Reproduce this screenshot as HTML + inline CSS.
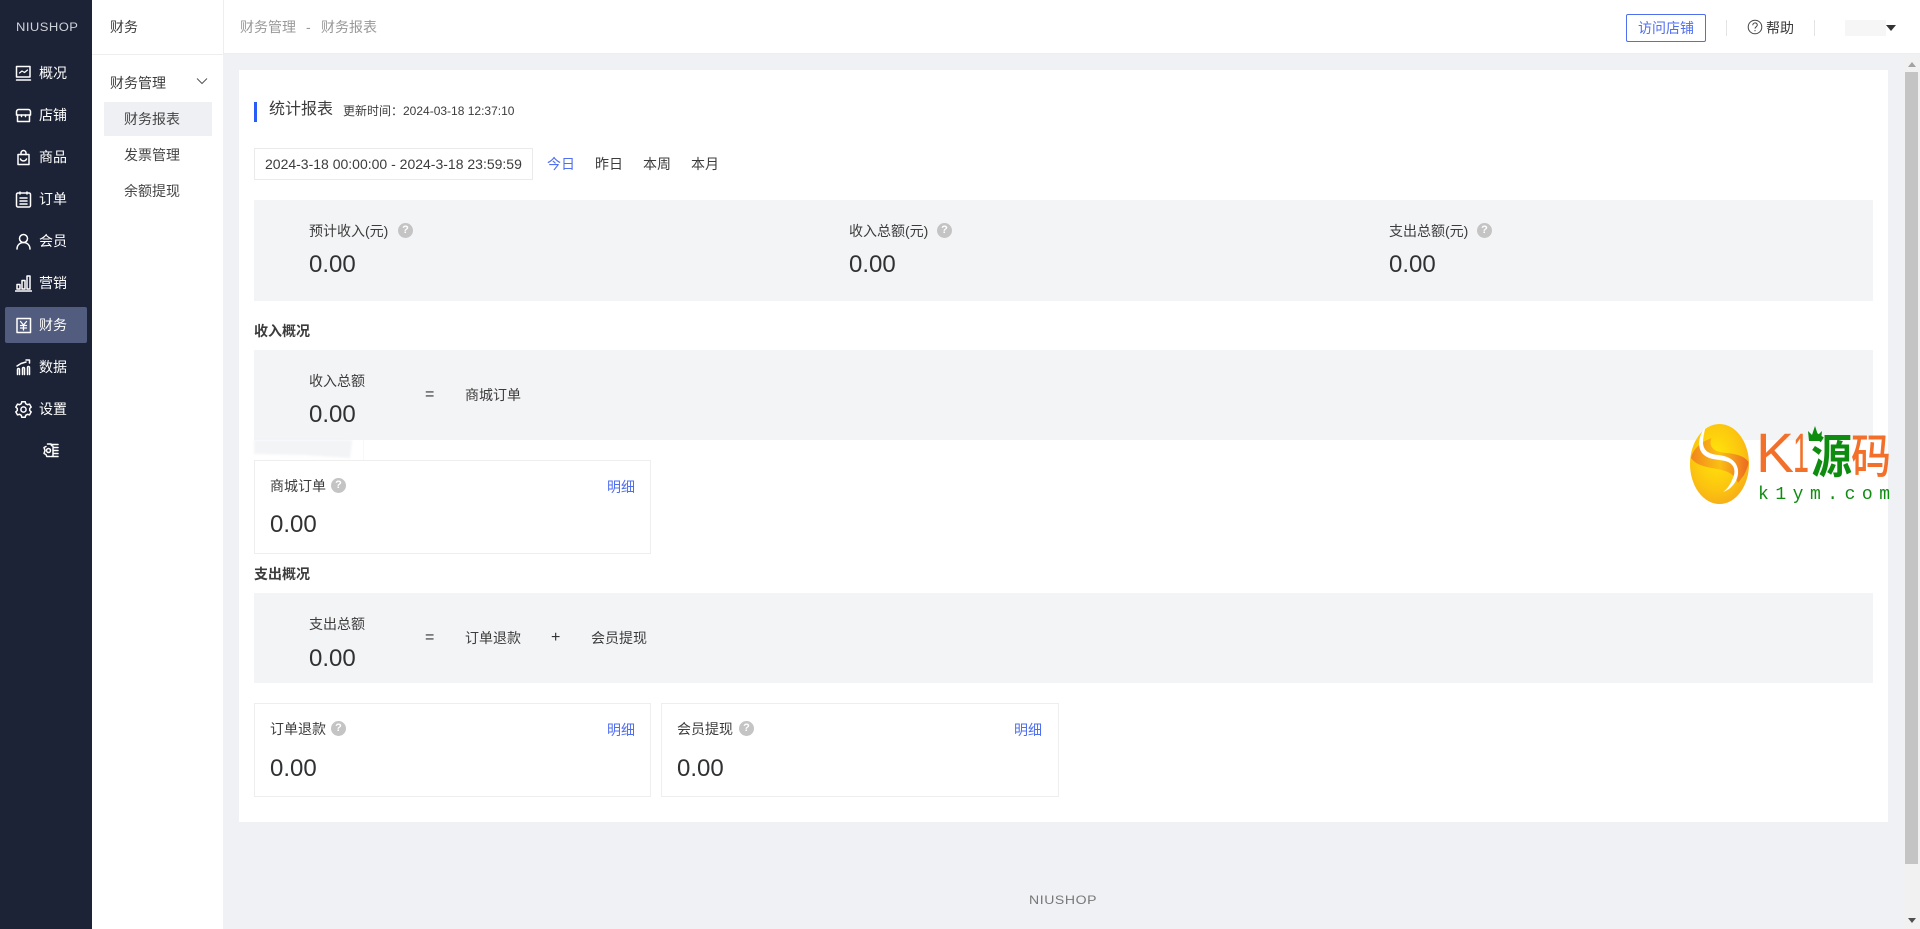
<!DOCTYPE html>
<html lang="zh-CN">
<head>
<meta charset="utf-8">
<title>财务报表</title>
<style>
*{box-sizing:border-box;margin:0;padding:0}
html,body{width:1920px;height:929px;overflow:hidden;background:#eff1f4;font-family:"Liberation Sans","Noto Sans CJK SC",sans-serif;color:#3c3c3c;font-size:14px}
.a{position:absolute}
.t{position:absolute;line-height:20px;height:20px;white-space:nowrap}
.nav{color:#fff;left:39px;font-size:14px;width:40px}
.ic{position:absolute;fill:none;stroke:#fff;stroke-width:1.5;stroke-linecap:round;stroke-linejoin:round}
.box{position:absolute;background:#f3f4f6;left:254px;width:1619px}
.card{position:absolute;background:#fff;border:1px solid #eeeeee}
.v{position:absolute;font-size:24px;line-height:30px;height:30px;color:#303133;white-space:nowrap}
.q{position:absolute;width:15px;height:15px;border-radius:50%;background:#c4c4c4;color:#fff;font-size:11px;line-height:15px;text-align:center;font-weight:bold}
.b{color:#4f6ef0}
.g{color:#999}
.eq{font-size:16px;color:#333}
</style>
</head>
<body>
<!-- left dark nav -->
<div class="a" style="left:0;top:0;width:92px;height:929px;background:#1d2336"></div>
<div class="t" style="left:16px;top:18px;width:62px;color:#cfd1d8;font-size:11.5px;letter-spacing:.4px;transform-origin:left;transform:scaleX(1.13)">NIUSHOP</div>
<div class="a" style="left:5px;top:307px;width:82px;height:36px;background:#525c7e;border-radius:2px"></div>

<svg class="ic" style="left:15px;top:65px" width="17" height="17" viewBox="0 0 17 17"><rect x="1.5" y="1.5" width="13.5" height="10.5"/><path d="M1.5 15h14"/><path d="M4.500 8l2.500-2 2.500 1.500L12.500 5" stroke-width="1.2"/></svg>
<div class="t nav" style="top:63px">概况</div>
<svg class="ic" style="left:15px;top:107px" width="17" height="17" viewBox="0 0 17 17"><path d="M3.500 2.500h10c1.200 0 2 1 2 2.500v3h-14V5c0-1.500.8-2.500 2-2.500z"/><path d="M2.500 8v6.500h12V8M6.500 8v1.500M10.500 8v1.500"/></svg>
<div class="t nav" style="top:105px">店铺</div>
<svg class="ic" style="left:15px;top:149px" width="17" height="17" viewBox="0 0 17 17"><path d="M3 5.500h11v10H3z"/><path d="M6 5.500V4a2.500 2.500 0 0 1 5 0v1.500M5.500 10c1 2.500 5 2.500 6 0"/></svg>
<div class="t nav" style="top:147px">商品</div>
<svg class="ic" style="left:15px;top:191px" width="17" height="17" viewBox="0 0 17 17"><rect x="1.500" y="2" width="14" height="14" rx="1.500"/><path d="M5 1v2M12 1v2M5 7h7M5 10h7M5 13h7"/></svg>
<div class="t nav" style="top:189px">订单</div>
<svg class="ic" style="left:15px;top:233px" width="17" height="17" viewBox="0 0 17 17" stroke-width="1.700"><circle cx="8.500" cy="5.500" r="4"/><path d="M2 16c0-4 3-6.500 6.500-6.500S15 12 15 16"/></svg>
<div class="t nav" style="top:231px">会员</div>
<svg class="ic" style="left:15px;top:275px" width="17" height="17" viewBox="0 0 17 17" stroke-width="1.200"><path d="M.5 16h16" stroke-width="1.500"/><rect x="2" y="9.500" width="3" height="4.500"/><rect x="7" y="5.500" width="3" height="8.500"/><rect x="12" y="1" width="3" height="13"/></svg>
<div class="t nav" style="top:273px">营销</div>
<svg class="ic" style="left:15px;top:317px" width="17" height="17" viewBox="0 0 17 17"><path d="M2 1.500h13.500v14H2z"/><path d="M5.500 4.500l3 3.500 3-3.500M5.500 8.500h6M5.500 11h6M8.500 8v5" stroke-width="1.300"/></svg>
<div class="t nav" style="top:315px">财务</div>
<svg class="ic" style="left:15px;top:359px" width="17" height="17" viewBox="0 0 17 17" stroke-width="1.300"><path d="M2.500 15.500v-5a1 1 0 0 1 2 0v5M7.500 15.500v-6a1 1 0 0 1 2 0v6M12.500 15.500v-7a1 1 0 0 1 2 0v7"/><path d="M2 7l4-2.500 5-1.500"/><path d="M11 1h3.500v3"/></svg>
<div class="t nav" style="top:357px">数据</div>
<svg class="ic" style="left:15px;top:401px" width="17" height="17" viewBox="0 0 17 17" stroke-width="1.400"><path d="M6.800 1.200h3.400l.5 2 1.800 1 2-.6 1.700 3-1.500 1.400v2l1.500 1.400-1.700 3-2-.6-1.800 1-.5 2H6.800l-.5-2-1.800-1-2 .6-1.700-3L2.300 10V8L.8 6.600l1.700-3 2 .6 1.800-1z" transform="translate(0 -.5)"/><circle cx="8.500" cy="8.500" r="2.600"/></svg>
<div class="t nav" style="top:399px">设置</div>
<svg class="ic" style="left:43px;top:442px" width="16" height="17" viewBox="0 0 16 17" stroke-width="1.200"><path d="M4.500 2h3.500l.5 1.500 1.500.8M3 4.500L1 5.500l1 3-1 3 2 1 .8 2h3"/><circle cx="5.500" cy="8.500" r="2"/><path d="M8 2.500h7M10 5.500h5M10 8.500h5M10 11.500h5M8 14.500h7M10 5.500v9"/></svg>

<!-- second nav -->
<div class="a" style="left:92px;top:0;width:131px;height:929px;background:#fff"></div>
<div class="a" style="left:92px;top:54px;width:131px;height:1px;background:#eeeeee"></div>
<div class="t" style="left:110px;top:17px">财务</div>
<div class="t" style="left:110px;top:73px">财务管理</div>
<svg class="a" style="left:196px;top:77px" width="12" height="8" viewBox="0 0 12 8" fill="none" stroke="#555" stroke-width="1"><path d="M1 1.500l5 5 5-5"/></svg>
<div class="a" style="left:104px;top:102px;width:108px;height:34px;background:#eef0f3"></div>
<div class="t" style="left:124px;top:109px;color:#444">财务报表</div>
<div class="t" style="left:124px;top:145px;color:#444">发票管理</div>
<div class="t" style="left:124px;top:181px;color:#444">余额提现</div>

<!-- header -->
<div class="a" style="left:223px;top:0;width:1697px;height:54px;background:#fff;border-bottom:1px solid #eceef1"></div>
<div class="a" style="left:223px;top:0;width:1px;height:54px;background:#eeeeee"></div>
<div class="t g" style="left:240px;top:17px">财务管理</div>
<div class="t g" style="left:306px;top:17px">-</div>
<div class="t g" style="left:321px;top:17px">财务报表</div>
<div class="a b" style="left:1626px;top:14px;width:80px;height:28px;border:1px solid #4f6ef0;border-radius:2px;text-align:center;line-height:26px;font-size:14px">访问店铺</div>
<div class="a" style="left:1726px;top:20px;width:1px;height:16px;background:#e4e4e4"></div>
<svg class="a" style="left:1746.500px;top:19px" width="16" height="16" viewBox="0 0 16 16" fill="none" stroke="#444" stroke-width="1"><circle cx="8" cy="8" r="6.800"/><path d="M5.800 6.200c0-3 4.500-3 4.500-.2 0 1.800-2.300 1.800-2.300 3.600"/><path d="M8 11v1.200"/></svg>
<div class="t" style="left:1766px;top:18px">帮助</div>
<div class="a" style="left:1814px;top:20px;width:1px;height:16px;background:#e4e4e4"></div>
<div class="a" style="left:1845px;top:20px;width:41px;height:16px;background:#f6f6f7"></div>
<div class="a" style="left:1886px;top:25px;width:0;height:0;border-left:5.500px solid transparent;border-right:5.500px solid transparent;border-top:6px solid #333"></div>

<!-- scrollbar -->
<div class="a" style="left:1904px;top:55px;width:16px;height:874px;background:#f1f1f1"></div>
<div class="a" style="left:1905px;top:72px;width:13px;height:792px;background:#c4c4c4"></div>
<div class="a" style="left:1908px;top:62px;width:0;height:0;border-left:4px solid transparent;border-right:4px solid transparent;border-bottom:5px solid #a3a3a3"></div>
<div class="a" style="left:1908px;top:918px;width:0;height:0;border-left:4px solid transparent;border-right:4px solid transparent;border-top:5px solid #505050"></div>

<!-- main card -->
<div class="a" style="left:239px;top:70px;width:1649px;height:752px;background:#fff"></div>
<div class="a" style="left:254px;top:102px;width:3px;height:20px;background:#2a5cf6"></div>
<div class="t" style="left:269px;top:100px;font-size:16px">统计报表</div>
<div class="t" style="left:343px;top:101px;font-size:12px">更新时间：2024-03-18 12:37:10</div>

<div class="a" style="left:254px;top:148px;width:279px;height:32px;border:1px solid #eaeaea"></div>
<div class="t" style="left:265px;top:154px">2024-3-18 00:00:00 - 2024-3-18 23:59:59</div>
<div class="t b" style="left:547px;top:154px">今日</div>
<div class="t" style="left:595px;top:154px">昨日</div>
<div class="t" style="left:643px;top:154px">本周</div>
<div class="t" style="left:691px;top:154px">本月</div>

<div class="box" style="top:200px;height:101px"></div>
<div class="t" style="left:309px;top:221px">预计收入(元)</div><div class="q" style="left:398px;top:223px">?</div>
<div class="v" style="left:309px;top:250px">0.00</div>
<div class="t" style="left:849px;top:221px">收入总额(元)</div><div class="q" style="left:937px;top:223px">?</div>
<div class="v" style="left:849px;top:250px">0.00</div>
<div class="t" style="left:1389px;top:221px">支出总额(元)</div><div class="q" style="left:1477px;top:223px">?</div>
<div class="v" style="left:1389px;top:250px">0.00</div>

<div class="t" style="left:254px;top:321px;font-weight:bold">收入概况</div>
<div class="box" style="top:350px;height:90px"></div>
<svg class="a" style="left:254px;top:440px;filter:blur(1px)" width="110" height="30"><path d="M0 0H98V2L96 18 50 15 0 14z" fill="#f3f4f6"/></svg>
<div class="a" style="left:363px;top:440px;width:1px;height:30px;background:#f8f8f8"></div>
<div class="t" style="left:309px;top:371px">收入总额</div>
<div class="v" style="left:309px;top:400px">0.00</div>
<div class="t eq" style="left:425px;top:385px">=</div>
<div class="t" style="left:465px;top:385px">商城订单</div>

<div class="card" style="left:254px;top:460px;width:397px;height:94px"></div>
<div class="t" style="left:270px;top:476px">商城订单</div><div class="q" style="left:331px;top:478px">?</div>
<div class="t b" style="left:607px;top:477px">明细</div>
<div class="v" style="left:270px;top:510px">0.00</div>

<div class="t" style="left:254px;top:564px;font-weight:bold">支出概况</div>
<div class="box" style="top:593px;height:90px"></div>
<div class="t" style="left:309px;top:614px">支出总额</div>
<div class="v" style="left:309px;top:644px">0.00</div>
<div class="t eq" style="left:425px;top:628px">=</div>
<div class="t" style="left:465px;top:628px">订单退款</div>
<div class="t eq" style="left:551px;top:628px">+</div>
<div class="t" style="left:591px;top:628px">会员提现</div>

<div class="card" style="left:254px;top:703px;width:397px;height:94px"></div>
<div class="t" style="left:270px;top:719px">订单退款</div><div class="q" style="left:331px;top:721px">?</div>
<div class="t b" style="left:607px;top:720px">明细</div>
<div class="v" style="left:270px;top:754px">0.00</div>

<div class="card" style="left:661px;top:703px;width:398px;height:94px"></div>
<div class="t" style="left:677px;top:719px">会员提现</div><div class="q" style="left:739px;top:721px">?</div>
<div class="t b" style="left:1014px;top:720px">明细</div>
<div class="v" style="left:677px;top:754px">0.00</div>

<div class="t" style="left:1029px;top:890px;color:#777;font-size:12px;width:68px;letter-spacing:.5px;transform-origin:left;transform:scaleX(1.17)">NIUSHOP</div>

<!-- watermark -->
<svg class="a" style="left:1680px;top:415px" width="225" height="100" viewBox="1680 415 225 100">
<defs>
<radialGradient id="eg" cx=".45" cy=".4" r=".7"><stop offset="0" stop-color="#ffe60a"/><stop offset=".6" stop-color="#fcc50f"/><stop offset="1" stop-color="#f5a51c"/></radialGradient>
<linearGradient id="rd" x1="0" y1="0" x2="1" y2="0"><stop offset="0" stop-color="#ee6f22"/><stop offset=".5" stop-color="#f9b416"/><stop offset="1" stop-color="#e8502a"/></linearGradient>
</defs>
<ellipse cx="1719.500" cy="464" rx="29.500" ry="40" fill="url(#eg)"/>
<path d="M1691 458c6 8 16 9 26 11 12 2 18 6 21 14l6-8c2-4 4-8 4.500-13-4-6-12-8-22-9-14-1-18-7-15-15-10 4-18 10-20.500 20z" fill="url(#rd)" opacity=".75"/>
<path d="M1705 428c-6 7-8 18-3 25 6 7 14 6 23 8 9 2 12 10 7 19-2 5-5 9-9 12 9-3 16-12 15-22-1-9-9-14-20-15-10-1-15-5-15-13 0-6 2-11 2-14z" fill="#fff"/>
<text x="1756" y="472" font-family="Liberation Sans" font-size="56" fill="#f3702a" textLength="38" lengthAdjust="spacingAndGlyphs">K</text>
<text x="1793" y="472" font-family="Liberation Sans" font-size="56" fill="#f3702a" textLength="16" lengthAdjust="spacingAndGlyphs">1</text>
<text x="1811" y="473" font-family="Noto Sans CJK SC" font-weight="700" font-size="47" fill="#0e8c10" textLength="41" lengthAdjust="spacingAndGlyphs">源</text>
<text x="1851" y="473" font-family="Noto Sans CJK SC" font-weight="500" font-size="47" fill="#f3702a" textLength="40" lengthAdjust="spacingAndGlyphs">码</text>
<path d="M1809 441l-1-10 4 4 3-9 3 9 4-4-1 10z" fill="#0e8c10"/>
<text x="1758" y="499" font-family="Liberation Mono" font-size="18" fill="#0e8c10" textLength="132">k1ym.com</text>
</svg>
</body>
</html>
